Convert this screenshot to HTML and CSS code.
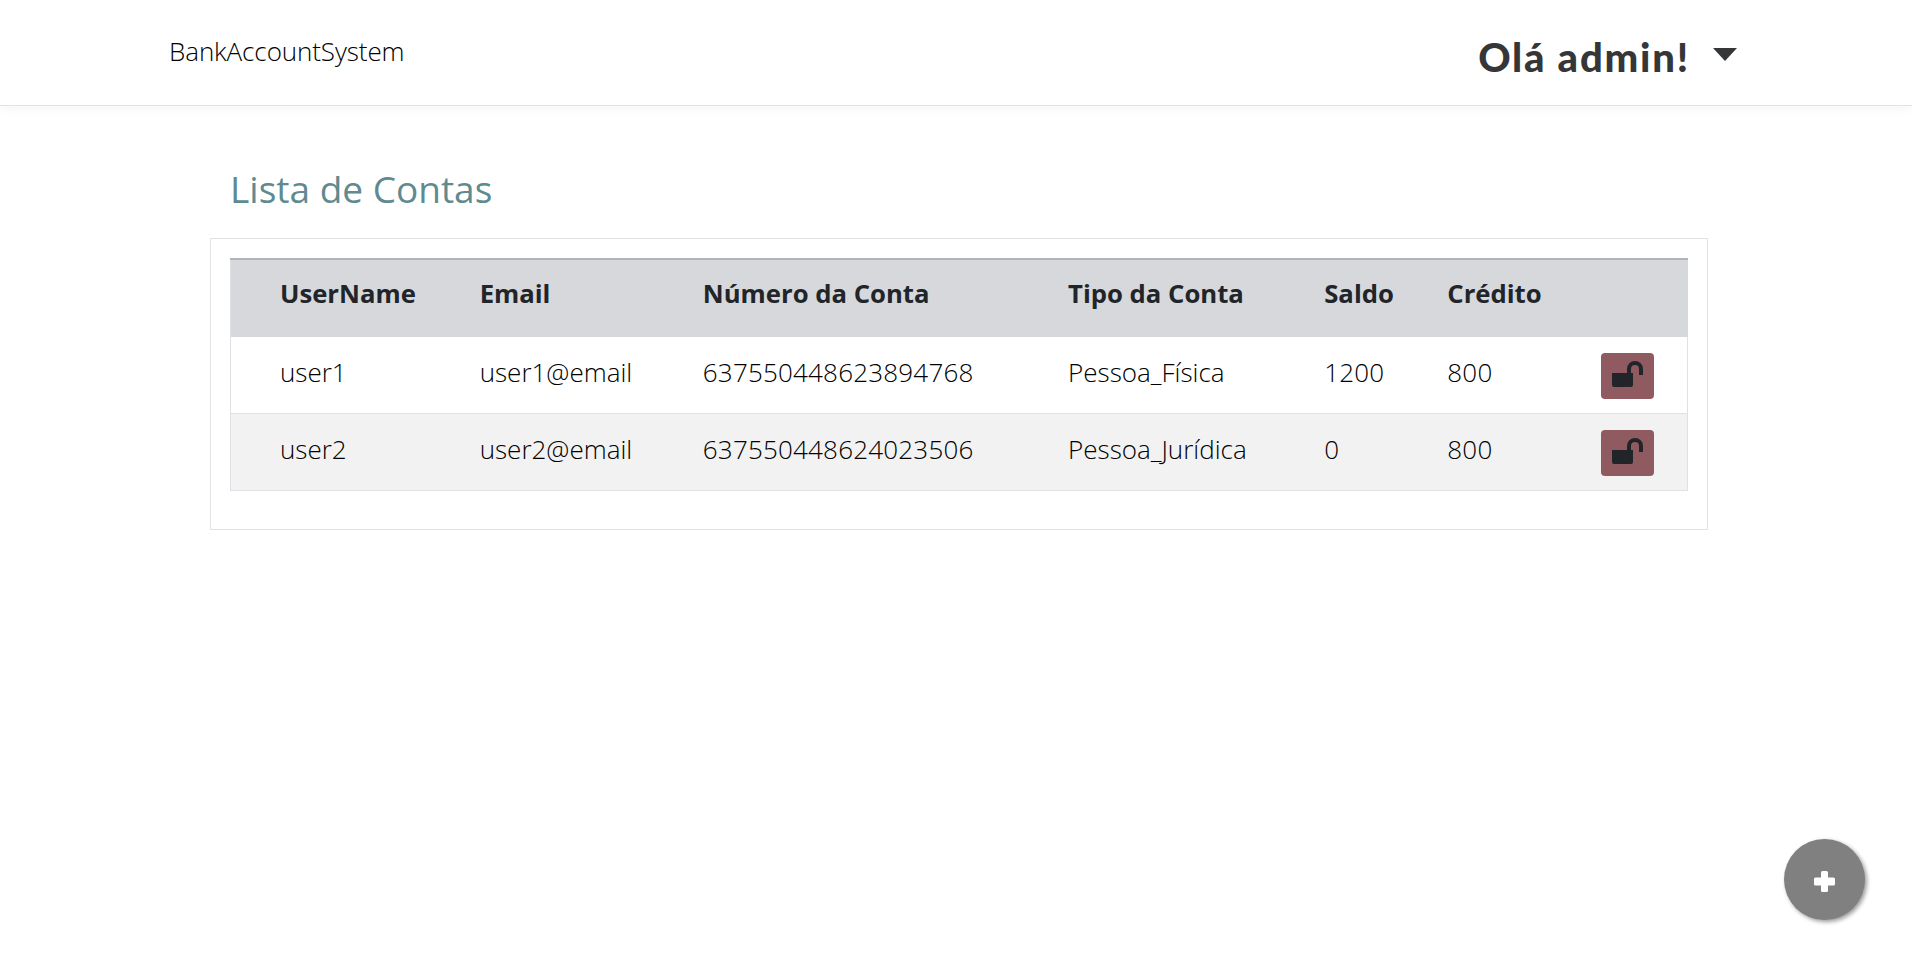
FILE: index.html
```html
<!DOCTYPE html>
<html lang="en">
<head>
  <meta charset="UTF-8">
  <title>BankAccountSystem</title>
  <link rel="stylesheet" href="styles.css">
</head>
<body>
  <header class="topbar">
    <a class="brand" href="#">BankAccountSystem</a>
    <div class="user-menu">
      <span class="user-name">Olá admin!</span>
      <span class="caret"></span>
    </div>
  </header>

  <main class="content">
    <h1 class="page-title">Lista de Contas</h1>

    <div class="card">
      <table class="accounts">
        <colgroup>
          <col class="col-user">
          <col class="col-email">
          <col class="col-number">
          <col class="col-type">
          <col class="col-balance">
          <col class="col-credit">
          <col class="col-action">
        </colgroup>
        <thead>
          <tr>
            <th>UserName</th>
            <th>Email</th>
            <th>Número da Conta</th>
            <th>Tipo da Conta</th>
            <th>Saldo</th>
            <th>Crédito</th>
            <th></th>
          </tr>
        </thead>
        <tbody>
          <tr>
            <td>user1</td>
            <td>user1@email</td>
            <td class="num">637550448623894768</td>
            <td>Pessoa_Física</td>
            <td class="num">1200</td>
            <td class="num">800</td>
            <td class="action-cell">
              <button class="lock-btn" type="button" aria-label="Bloquear">
                <svg width="31" height="26" viewBox="0 0 31 26"><path d="M0 12H21V24a2 2 0 0 1-2 2H2a2 2 0 0 1-2-2Z" fill="#212529"/><path d="M17 12V8a6 6 0 0 1 12 0v6" fill="none" stroke="#212529" stroke-width="4"/></svg>
              </button>
            </td>
          </tr>
          <tr>
            <td>user2</td>
            <td>user2@email</td>
            <td class="num">637550448624023506</td>
            <td>Pessoa_Jurídica</td>
            <td class="num">0</td>
            <td class="num">800</td>
            <td class="action-cell">
              <button class="lock-btn" type="button" aria-label="Bloquear">
                <svg width="31" height="26" viewBox="0 0 31 26"><path d="M0 12H21V24a2 2 0 0 1-2 2H2a2 2 0 0 1-2-2Z" fill="#212529"/><path d="M17 12V8a6 6 0 0 1 12 0v6" fill="none" stroke="#212529" stroke-width="4"/></svg>
              </button>
            </td>
          </tr>
        </tbody>
      </table>
    </div>
  </main>

  <button class="fab" type="button" aria-label="Adicionar">
    <svg width="21" height="21" viewBox="0 0 21 21" fill="#fff"><rect x="7" y="0" width="7" height="21" rx="1.5"/><rect x="0" y="6.5" width="21" height="8" rx="1.5"/></svg>
  </button>
</body>
</html>
```

FILE: styles.css
```css
html, body {
  margin: 0;
  padding: 0;
  background: #fff;
  color: #212529;
  font-family: "Open Sans", "Noto Sans", sans-serif;
}

.topbar {
  display: flex;
  justify-content: space-between;
  height: 105px;
  padding: 0 175px 0 169px;
  border-bottom: 1px solid #e3e3e3;
  box-shadow: 0 2px 12px rgba(0, 0, 0, 0.05);
}

.brand {
  margin-top: 35px;
  font-size: 26px;
  font-weight: 300;
  line-height: 32px;
  letter-spacing: -0.1px;
  color: #000;
  text-decoration: none;
}

.user-menu {
  display: flex;
  align-items: flex-start;
  gap: 23px;
  margin-top: 33px;
  color: #343638;
}

.user-name {
  font-family: "Lato", sans-serif;
  font-size: 40px;
  font-weight: 900;
  line-height: 48px;
  letter-spacing: 1.8px;
}

.caret {
  width: 0;
  height: 0;
  margin-top: 15px;
  border-left: 12.5px solid transparent;
  border-right: 12.5px solid transparent;
  border-top: 13px solid #343638;
}

.content {
  padding: 53px 204px 0 210px;
}

.page-title {
  margin: 0 0 19px 20px;
  font-size: 37px;
  font-weight: 400;
  line-height: 60px;
  color: #5f8a90;
}

.card {
  padding: 19px 19px 38px 19px;
  border: 1px solid #e3e3e3;
}

.accounts {
  width: 100%;
  border-collapse: collapse;
  table-layout: fixed;
}

.col-user { width: 249px; }
.col-email { width: 223px; }
.col-number { width: 365px; }
.col-type { width: 256px; }
.col-balance { width: 123px; }
.col-credit { width: 154px; }
.col-action { width: 86px; }

.accounts th {
  height: 66px;
  padding: 0 0 11px;
  background: #d6d8db;
  border-top: 2px solid #b2b4b7;
  font-size: 25.7px;
  font-weight: 700;
  text-align: left;
}

.accounts td {
  height: 70px;
  padding: 0 0 6px;
  border-bottom: 1px solid #dee2e6;
  color: #000;
  font-size: 26px;
  font-weight: 300;
}

.accounts td.num {
  letter-spacing: 0.2px;
}

.accounts th:first-child,
.accounts td:first-child {
  padding-left: 49px;
  border-left: 1px solid #dee2e6;
}

.accounts td:last-child {
  border-right: 1px solid #dee2e6;
}

.accounts tbody tr:nth-child(even) {
  background: #f2f2f2;
}

.accounts td.action-cell {
  padding: 2px 0 0;
  vertical-align: middle;
}

.lock-btn {
  display: block;
  width: 53px;
  height: 46px;
  padding: 8px 11px 12px;
  border: none;
  border-radius: 4px;
  background: #8f5a60;
}

.lock-btn svg {
  display: block;
}

.fab {
  position: fixed;
  right: 47px;
  bottom: 44px;
  display: flex;
  align-items: center;
  justify-content: center;
  width: 81px;
  height: 81px;
  padding: 4px 0 0;
  border: none;
  border-radius: 50%;
  background: #808080;
  box-shadow: 2px 2px 4px #999;
}
```
